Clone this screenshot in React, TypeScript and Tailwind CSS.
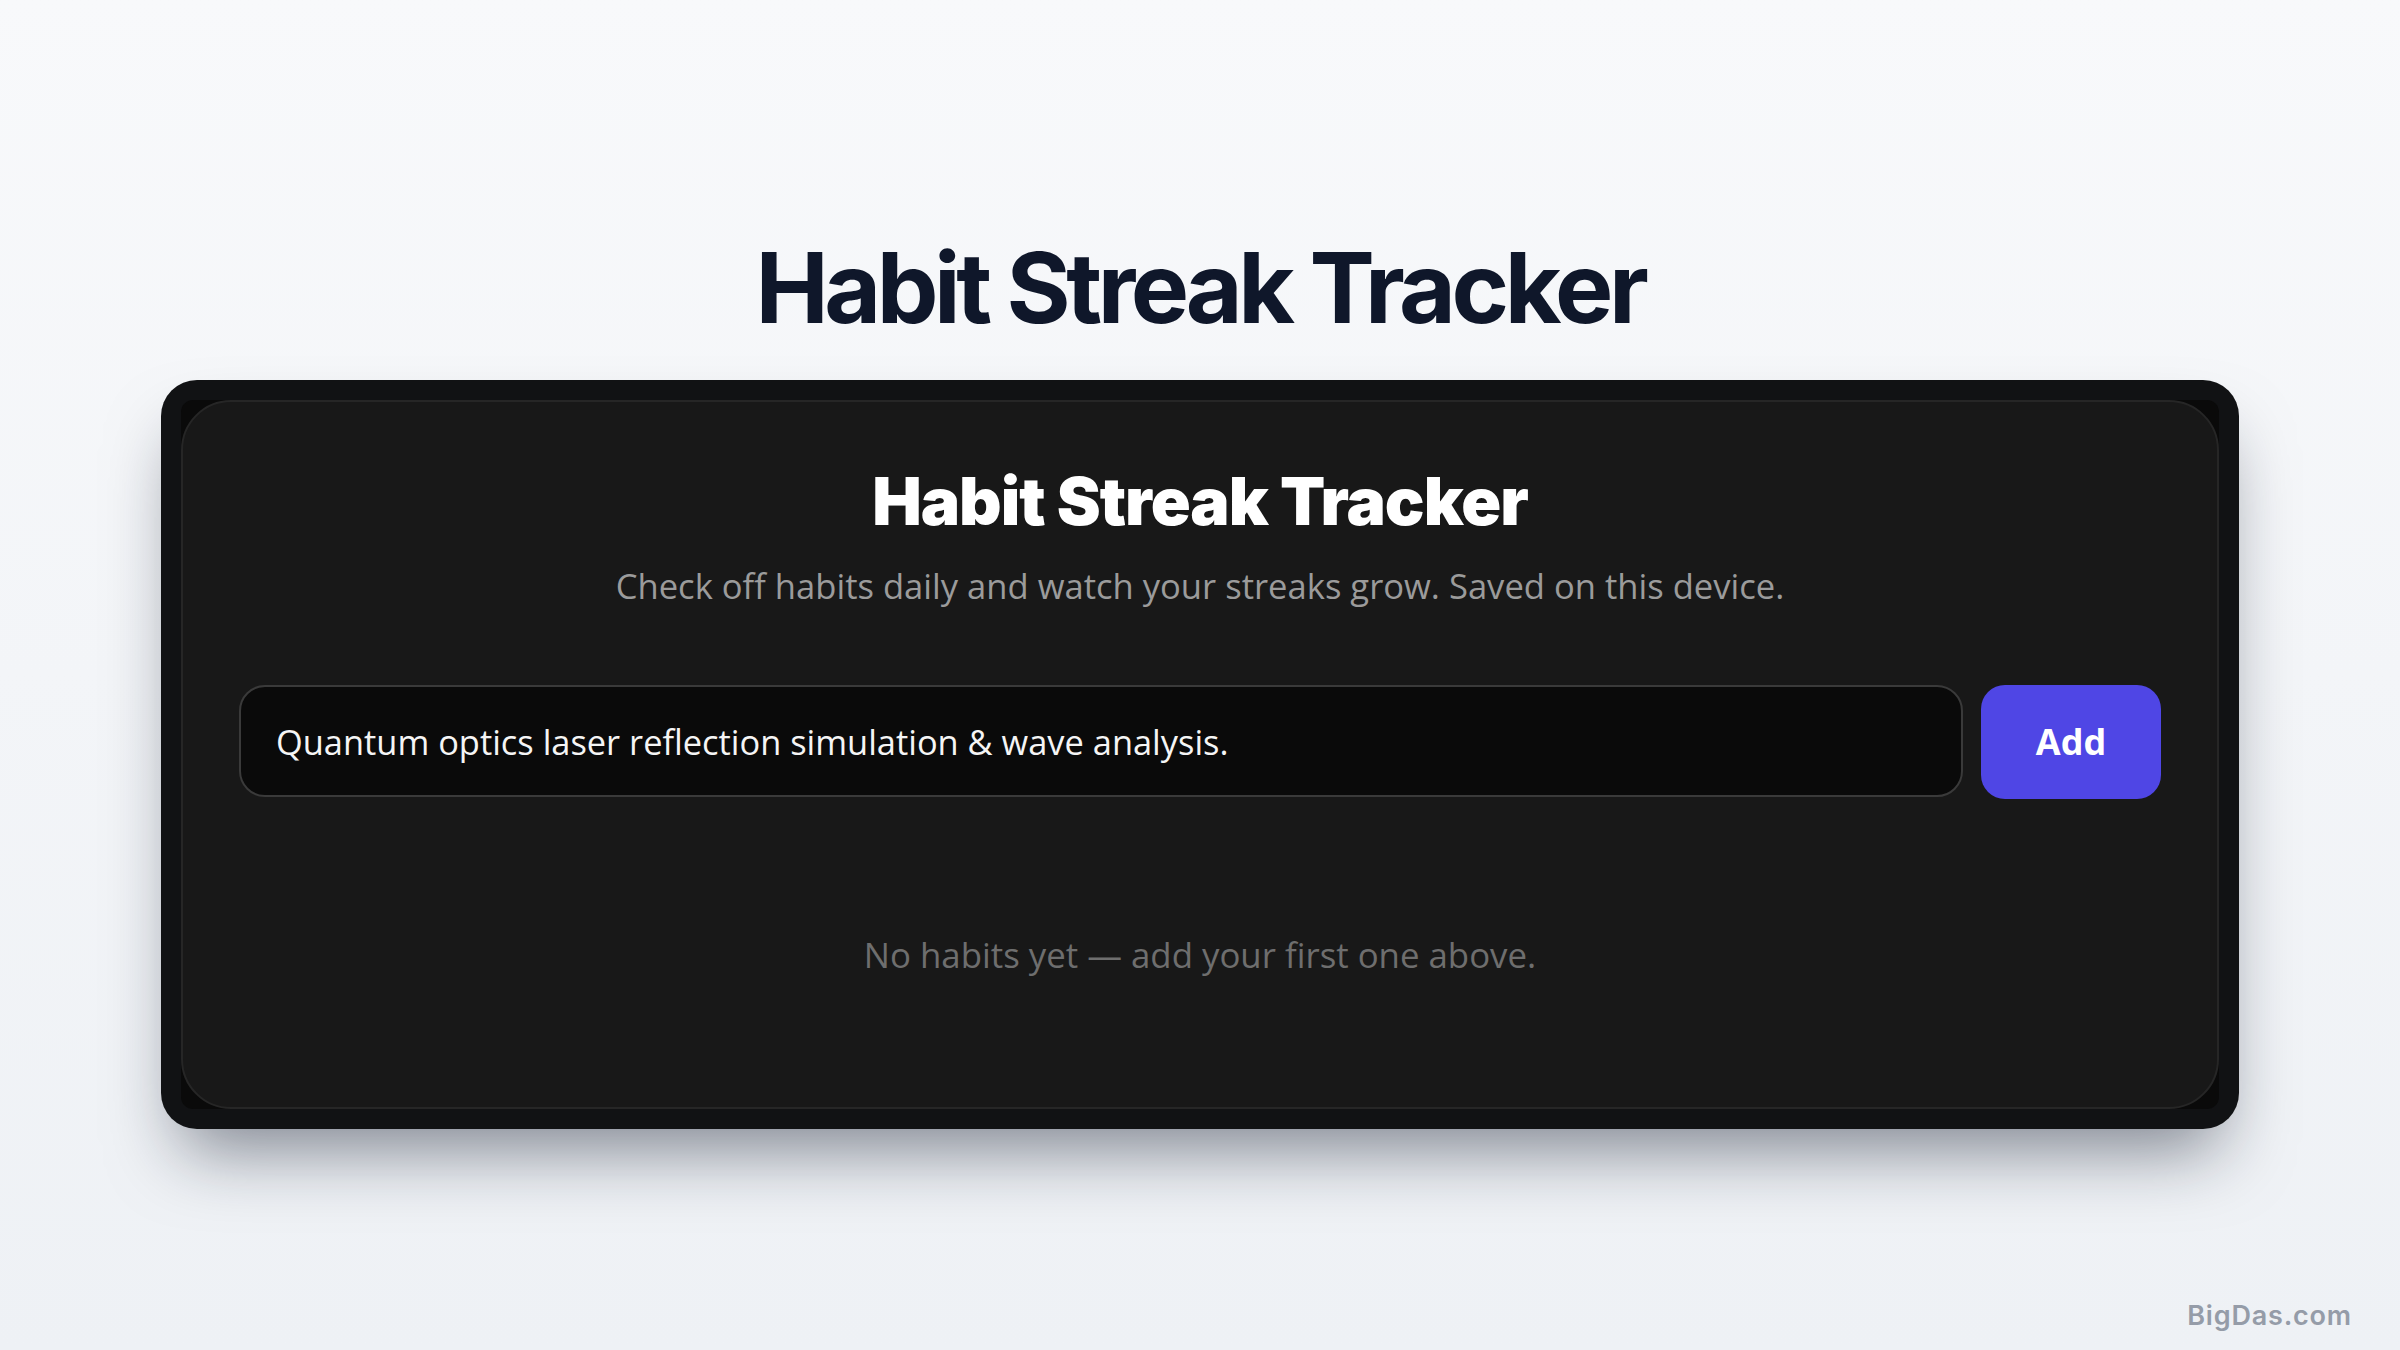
import { useState } from "react";

const body = "font-['Open_Sans','Noto_Sans',sans-serif]";

const App = () => {
  const [draft, setDraft] = useState("Quantum optics laser reflection simulation & wave analysis.");

  return (
    <main className="relative min-h-screen bg-gradient-to-b from-[#f8f9fb] to-[#eef1f5] pt-[239px]">
      {/* Page heading */}
      <h1 className="text-center font-['Inter',sans-serif] text-[98px] font-bold leading-none tracking-[-0.045em] text-[#0f172a]">
        Habit Streak Tracker
      </h1>

      {/* App frame */}
      <div className="mx-auto mt-[43px] w-[2078px] rounded-[36px] bg-[#111214] p-[20px] shadow-[0_40px_70px_-20px_rgba(15,23,42,0.5)]">
        <div className="rounded-[12px] bg-[#0a0a0a]">
          <section className="rounded-[50px] border-2 border-[#262626] bg-[#181818] px-[56px] pt-[66px] pb-[127px]">
            <h2 className="text-center font-['Inter',sans-serif] text-[66px] font-black leading-none tracking-[-0.015em] text-white">
              Habit Streak Tracker
            </h2>
            <p className={`${body} mt-[26px] text-center text-[34.6px] leading-[51px] text-[#9b9b9b]`}>
              Check off habits daily and watch your streaks grow. Saved on this device.
            </p>

            <form
              className="mt-[74px] flex gap-[18px]"
              onSubmit={(e) => e.preventDefault()}
            >
              <input
                value={draft}
                onChange={(e) => setDraft(e.target.value)}
                className={`${body} h-[112px] flex-1 rounded-[26px] border-2 border-[#3a3a3a] bg-[#0a0a0a] px-[35px] text-[34.4px] text-[#f5f5f5] outline-none`}
              />
              <button
                type="submit"
                className={`${body} h-[114px] w-[180px] rounded-[24px] bg-[#4f46e5] text-[36px] font-bold text-white`}
              >
                Add
              </button>
            </form>

            <p className={`${body} mt-[130px] text-center text-[34.8px] leading-[51px] text-[#6e6e6e]`}>
              No habits yet — add your first one above.
            </p>
          </section>
        </div>
      </div>

      {/* Watermark */}
      <span className="absolute right-[48px] bottom-[14px] font-['Inter',sans-serif] text-[27px] font-semibold tracking-[0.03em] text-[#959ca8]">
        BigDas.com
      </span>
    </main>
  );
};

export default App;
